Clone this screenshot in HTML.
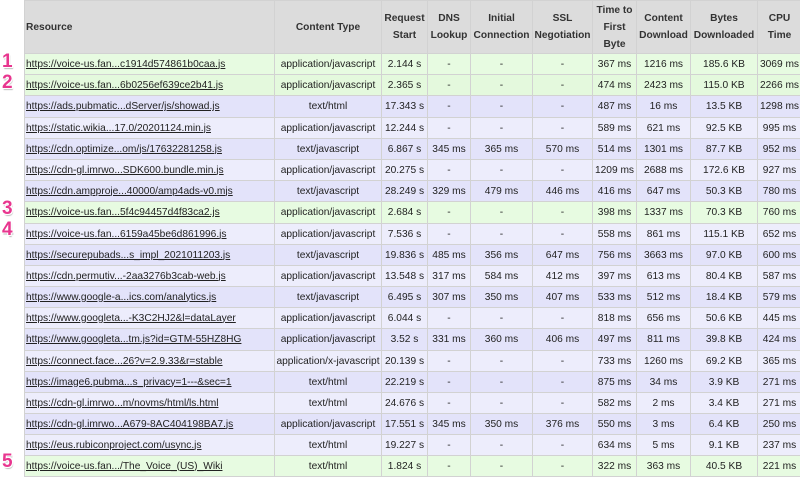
<!DOCTYPE html>
<html><head><meta charset="utf-8"><style>
html,body{margin:0;padding:0;background:#fff;width:800px;height:481px;overflow:hidden}
body{font-family:"Liberation Sans",Arial,sans-serif;font-size:10.2px;color:#222;position:relative}
table{position:absolute;left:24px;top:0;border-collapse:collapse;table-layout:fixed;width:777px}
td,th{border:1px solid #d2d2d2;padding:0;text-align:center;white-space:nowrap;overflow:hidden;line-height:13px}
th{background:#dcdcdc;color:#333;font-weight:bold;height:52px;line-height:17px;font-size:10.2px}
th.l{text-align:left;padding-left:1px}
td{height:20px}
td.l{text-align:left;padding-left:1px;text-decoration:underline;color:#222}
tr.p1 td{background:#e3e3fa}
tr.p2 td{background:#ededfc}
tr.g1 td{background:#e7fbe1}
tr.g2 td{background:#e4f9dd}
tr.x td{height:21px}
.n{position:absolute;left:2px;font-weight:900;font-size:19px;line-height:20px;color:#e8368f;text-shadow:1px 1px 0 #fff,-1px -1px 0 #fff,1px -1px 0 #fff,-1px 1px 0 #fff,1px 2px 1px #bbb}
</style></head><body>
<table>
<colgroup><col style="width:250px"><col style="width:107px"><col style="width:46px"><col style="width:43px"><col style="width:62px"><col style="width:60px"><col style="width:44px"><col style="width:54px"><col style="width:67px"><col style="width:44px"></colgroup>
<tr><th class="l">Resource</th><th>Content Type</th><th>Request<br>Start</th><th>DNS<br>Lookup</th><th>Initial<br>Connection</th><th>SSL<br>Negotiation</th><th>Time to<br>First<br>Byte</th><th>Content<br>Download</th><th>Bytes<br>Downloaded</th><th>CPU<br>Time</th></tr>
<tr class="g1"><td class="l">https://voice-us.fan...c1914d574861b0caa.js</td><td>application/javascript</td><td>2.144 s</td><td>-</td><td>-</td><td>-</td><td>367 ms</td><td>1216 ms</td><td>185.6 KB</td><td>3069 ms</td></tr>
<tr class="g2"><td class="l">https://voice-us.fan...6b0256ef639ce2b41.js</td><td>application/javascript</td><td>2.365 s</td><td>-</td><td>-</td><td>-</td><td>474 ms</td><td>2423 ms</td><td>115.0 KB</td><td>2266 ms</td></tr>
<tr class="p1 x"><td class="l">https://ads.pubmatic...dServer/js/showad.js</td><td>text/html</td><td>17.343 s</td><td>-</td><td>-</td><td>-</td><td>487 ms</td><td>16 ms</td><td>13.5 KB</td><td>1298 ms</td></tr>
<tr class="p2"><td class="l">https://static.wikia...17.0/20201124.min.js</td><td>application/javascript</td><td>12.244 s</td><td>-</td><td>-</td><td>-</td><td>589 ms</td><td>621 ms</td><td>92.5 KB</td><td>995 ms</td></tr>
<tr class="p1"><td class="l">https://cdn.optimize...om/js/17632281258.js</td><td>text/javascript</td><td>6.867 s</td><td>345 ms</td><td>365 ms</td><td>570 ms</td><td>514 ms</td><td>1301 ms</td><td>87.7 KB</td><td>952 ms</td></tr>
<tr class="p2"><td class="l">https://cdn-gl.imrwo...SDK600.bundle.min.js</td><td>application/javascript</td><td>20.275 s</td><td>-</td><td>-</td><td>-</td><td>1209 ms</td><td>2688 ms</td><td>172.6 KB</td><td>927 ms</td></tr>
<tr class="p1"><td class="l">https://cdn.ampproje...40000/amp4ads-v0.mjs</td><td>text/javascript</td><td>28.249 s</td><td>329 ms</td><td>479 ms</td><td>446 ms</td><td>416 ms</td><td>647 ms</td><td>50.3 KB</td><td>780 ms</td></tr>
<tr class="g1 x"><td class="l">https://voice-us.fan...5f4c94457d4f83ca2.js</td><td>application/javascript</td><td>2.684 s</td><td>-</td><td>-</td><td>-</td><td>398 ms</td><td>1337 ms</td><td>70.3 KB</td><td>760 ms</td></tr>
<tr class="p2"><td class="l">https://voice-us.fan...6159a45be6d861996.js</td><td>application/javascript</td><td>7.536 s</td><td>-</td><td>-</td><td>-</td><td>558 ms</td><td>861 ms</td><td>115.1 KB</td><td>652 ms</td></tr>
<tr class="p1"><td class="l">https://securepubads...s_impl_2021011203.js</td><td>text/javascript</td><td>19.836 s</td><td>485 ms</td><td>356 ms</td><td>647 ms</td><td>756 ms</td><td>3663 ms</td><td>97.0 KB</td><td>600 ms</td></tr>
<tr class="p2"><td class="l">https://cdn.permutiv...-2aa3276b3cab-web.js</td><td>application/javascript</td><td>13.548 s</td><td>317 ms</td><td>584 ms</td><td>412 ms</td><td>397 ms</td><td>613 ms</td><td>80.4 KB</td><td>587 ms</td></tr>
<tr class="p1"><td class="l">https://www.google-a...ics.com/analytics.js</td><td>text/javascript</td><td>6.495 s</td><td>307 ms</td><td>350 ms</td><td>407 ms</td><td>533 ms</td><td>512 ms</td><td>18.4 KB</td><td>579 ms</td></tr>
<tr class="p2"><td class="l">https://www.googleta...-K3C2HJ2&amp;l=dataLayer</td><td>application/javascript</td><td>6.044 s</td><td>-</td><td>-</td><td>-</td><td>818 ms</td><td>656 ms</td><td>50.6 KB</td><td>445 ms</td></tr>
<tr class="p1 x"><td class="l">https://www.googleta...tm.js?id=GTM-55HZ8HG</td><td>application/javascript</td><td>3.52 s</td><td>331 ms</td><td>360 ms</td><td>406 ms</td><td>497 ms</td><td>811 ms</td><td>39.8 KB</td><td>424 ms</td></tr>
<tr class="p2"><td class="l">https://connect.face...26?v=2.9.33&amp;r=stable</td><td>application/x-javascript</td><td>20.139 s</td><td>-</td><td>-</td><td>-</td><td>733 ms</td><td>1260 ms</td><td>69.2 KB</td><td>365 ms</td></tr>
<tr class="p1"><td class="l">https://image6.pubma...s_privacy=1---&amp;sec=1</td><td>text/html</td><td>22.219 s</td><td>-</td><td>-</td><td>-</td><td>875 ms</td><td>34 ms</td><td>3.9 KB</td><td>271 ms</td></tr>
<tr class="p2"><td class="l">https://cdn-gl.imrwo...m/novms/html/ls.html</td><td>text/html</td><td>24.676 s</td><td>-</td><td>-</td><td>-</td><td>582 ms</td><td>2 ms</td><td>3.4 KB</td><td>271 ms</td></tr>
<tr class="p1"><td class="l">https://cdn-gl.imrwo...A679-8AC404198BA7.js</td><td>application/javascript</td><td>17.551 s</td><td>345 ms</td><td>350 ms</td><td>376 ms</td><td>550 ms</td><td>3 ms</td><td>6.4 KB</td><td>250 ms</td></tr>
<tr class="p2"><td class="l">https://eus.rubiconproject.com/usync.js</td><td>text/html</td><td>19.227 s</td><td>-</td><td>-</td><td>-</td><td>634 ms</td><td>5 ms</td><td>9.1 KB</td><td>237 ms</td></tr>
<tr class="g1"><td class="l">https://voice-us.fan.../The_Voice_(US)_Wiki</td><td>text/html</td><td>1.824 s</td><td>-</td><td>-</td><td>-</td><td>322 ms</td><td>363 ms</td><td>40.5 KB</td><td>221 ms</td></tr>
</table>
<div class="n" style="top:52px">1</div>
<div class="n" style="top:73px">2</div>
<div class="n" style="top:199px">3</div>
<div class="n" style="top:220px">4</div>
<div class="n" style="top:452px">5</div>
</body></html>
